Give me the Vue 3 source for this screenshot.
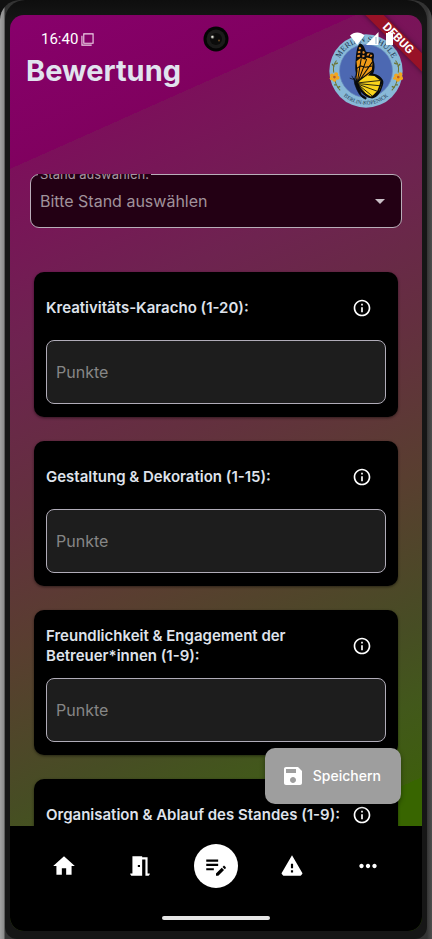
<script setup>
import { ref } from 'vue'

const stand = ref('')
const criteria = ref([
  { id: 'kreativitaet', title: 'Kreativitäts-Karacho (1-20):', points: '' },
  { id: 'gestaltung', title: 'Gestaltung & Dekoration (1-15):', points: '' },
  { id: 'freundlichkeit', title: 'Freundlichkeit & Engagement der Betreuer*innen (1-9):', points: '' },
  { id: 'organisation', title: 'Organisation & Ablauf des Standes (1-9):', points: '' },
])
const nav = [
  { id: 'home', label: 'Start', path: 'M10 20v-6h4v6h5v-8h3L12 3 2 12h3v8z' },
  { id: 'room', label: 'Räume', path: 'M14 6v15H3v-2h2V3h9v1h5v15h2v2h-4V6h-3zm-4 5v2h2v-2h-2z' },
  { id: 'rate', label: 'Bewertung', active: true, path: 'M3 10h11v2H3v-2zm0-2h11V6H3v2zm0 8h7v-2H3v2zm15.01-3.13.71-.71c.39-.39 1.02-.39 1.41 0l.71.71c.39.39.39 1.02 0 1.41l-.71.71-2.12-2.12zm-.71.71-5.3 5.3V21h2.12l5.3-5.3-2.12-2.12z' },
  { id: 'alert', label: 'Warnungen', path: 'M1 21h22L12 2 1 21zm12-3h-2v-2h2v2zm0-4h-2v-4h2v4z' },
  { id: 'more', label: 'Mehr', path: 'M6 10c-1.100 0-2 .9-2 2s.9 2 2 2 2-.9 2-2-.9-2-2-2zm12 0c-1.100 0-2 .9-2 2s.9 2 2 2 2-.9 2-2-.9-2-2-2zm-6 0c-1.100 0-2 .9-2 2s.9 2 2 2 2-.9 2-2-.9-2-2-2z' },
]
</script>

<template>
  <div class="device">
    <div class="bezel">
      <div class="screen">
        <div class="ribbon">DEBUG</div>
        <div class="status">
          <span class="clock">16:40</span>
          <svg class="sq" viewBox="0 0 14 14" aria-hidden="true">
            <path d="M3 1h10v10H3zM1 3v10h10.500" fill="none" stroke="#efd6e9" stroke-width="1.200" />
          </svg>
          <svg class="signals" viewBox="0 0 44 14" aria-hidden="true">
            <path d="M0 3.500C4-.6 10.500-.6 14.500 3.500L7.200 13z" fill="#fff" />
            <path d="M16 13 28.500 0v13z" fill="#fff" />
            <path d="M25.500 5h1v7h-1z" fill="#8fb2cc" />
            <path d="M36 1h2V0h3v1h2v12h-7z" fill="#fff" />
          </svg>
        </div>
        <svg class="camera" viewBox="0 0 26 26" aria-hidden="true">
          <circle cx="13" cy="13" r="12.500" fill="#050505" />
          <circle cx="13" cy="13" r="9.500" fill="#1b1b1a" />
          <circle cx="13" cy="13" r="6" fill="#0c0c0b" />
          <circle cx="9.500" cy="11" r="1.800" fill="#77776f" />
          <circle cx="9.300" cy="10.800" r=".9" fill="#f2f2ea" />
          <circle cx="16" cy="14.500" r="1" fill="#6b4a24" />
        </svg>

        <header class="top">
          <h1>Bewertung</h1>
          <svg class="logo" viewBox="27 28 218 218" role="img" aria-label="Merian Schule Berlin-Köpenick">
            <defs>
              <path id="arcTop" d="M50 137a86 86 0 0 1 172 0" />
              <path id="arcBottom" d="M37 137a99 99 0 0 0 198 0" />
            </defs>
            <circle cx="136" cy="137" r="108" fill="#88b9d8" />
            <circle cx="136" cy="137" r="78" fill="#4c68b2" stroke="#6889bd" stroke-width="2" />
            <text class="lg-top"><textPath href="#arcTop" startOffset="50%" text-anchor="middle">MERIAN SCHULE</textPath></text>
            <text class="lg-bottom"><textPath href="#arcBottom" startOffset="50%" text-anchor="middle">BERLIN-KÖPENICK</textPath></text>
            <g fill="none" stroke="#6c7434" stroke-width="3">
              <path d="M41 142q-4-22 8-36M44 162q4 20 16 32M231 142q4-22-8-36M228 162q-4 20-16 32" />
              <path d="M42 124l-6-8M45 117l8-4M48 178l-6 0M52 186l8-4M230 124l6-8M227 117l-8-4M224 178l6 0M220 186l-8-4" stroke-width="4" />
            </g>
            <g fill="#f3a61d">
              <circle cx="36" cy="150" r="6" /><circle cx="48" cy="147" r="6" /><circle cx="52" cy="157" r="6" /><circle cx="43" cy="163" r="6" /><circle cx="34" cy="159" r="5" />
              <circle cx="225" cy="150" r="6" /><circle cx="237" cy="147" r="6" /><circle cx="239" cy="158" r="6" /><circle cx="230" cy="163" r="6" /><circle cx="221" cy="158" r="5" />
            </g>
            <circle cx="43" cy="155" r="4" fill="#c45d15" />
            <circle cx="231" cy="155" r="4" fill="#c45d15" />

            <path d="M118 55c8 2 14 12 18 25l20 3c6 6 3 14 2 22 5 14 4 28-1 40 12 1 27 10 30 22 1 8-2 14-5 22-4 14-14 25-28 29-14-2-24-10-33-20l-14-27c-3-8-2-18-1-28-3-14-1-28 0-42 1-18 3-36 12-46z" fill="#090b0d" />
            <path d="M108 108l12-9 14 5 4-7 14 3 3 14-2 22-12 16-30 17-3-12 3-20z" fill="#ef9a18" />
            <path d="M109 164l34-14 18 2 18 14 2 12-5 15-12 14-14 5-18-10-14-18z" fill="#f9d41c" />
            <path d="M115 67l5-1 2 6-7 2zM112 79l7-2 1 6-8 2zM125 80l5-2 3 6-6 3zM111 90l7-1 0 6-8 1zM124 91l7-1 1 5-6 2zM139 86l8-2-3 7-6 1zM150 88l5 3-4 5-4-2z" fill="#e58a2b" />
            <g fill="none" stroke="#090b0d" stroke-width="3">
              <path d="M110 172l12-72M112 170l26-68M113 170l42-60M112 168l44-34M108 130l12-8 14 4 20-4" />
              <path d="M112 172l66-7M112 174l70 7M113 176l60 22M114 178l42 34M116 182l24 28" stroke-width="2.500" />
            </g>
            <path d="M181 166l-3 14-7 18-14 14" fill="none" stroke="#090b0d" stroke-width="5" />
            <path d="M100 158l14 20 8 28 15 10-2 4c-16-5-25-24-32-44zM100 161l-6-10M103 160l2-9M88 158l12 4" fill="#07090c" stroke="#07090c" stroke-width="2" />
          </svg>
        </header>

        <main class="scroll">
          <div class="select-field">
            <label for="stand">Stand auswählen:</label>
            <select id="stand" v-model="stand">
              <option value="">Bitte Stand auswählen</option>
            </select>
            <svg class="caret" viewBox="0 0 10 5" aria-hidden="true"><path d="M0 0h10L5 5z" fill="#c9bfc6" /></svg>
          </div>

          <section v-for="c in criteria" :key="c.id" class="card">
            <div class="card-head">
              <label :for="c.id">{{ c.title }}</label>
              <button type="button" class="info" :aria-label="'Info: ' + c.title">
                <svg viewBox="0 0 24 24" aria-hidden="true"><path d="M11 7h2v2h-2zm0 4h2v6h-2zm1-9C6.480 2 2 6.480 2 12s4.480 10 10 10 10-4.480 10-10S17.520 2 12 2zm0 18c-4.410 0-8-3.590-8-8s3.590-8 8-8 8 3.590 8 8-3.590 8-8 8z" fill="#fff" /></svg>
              </button>
            </div>
            <input :id="c.id" v-model="c.points" type="text" inputmode="numeric" placeholder="Punkte">
          </section>
        </main>

        <footer class="bottom">
          <button type="button" class="save">
            <svg viewBox="0 0 24 24" aria-hidden="true"><path d="M17 3H5c-1.110 0-2 .9-2 2v14c0 1.100.89 2 2 2h14c1.100 0 2-.9 2-2V7l-4-4zm-5 16c-1.660 0-3-1.340-3-3s1.340-3 3-3 3 1.340 3 3-1.340 3-3 3zm3-10H5V5h10v4z" fill="#fff" /></svg>
            <span>Speichern</span>
          </button>
          <nav>
            <a v-for="n in nav" :key="n.id" href="#" :class="{ active: n.active }" :aria-label="n.label">
              <svg viewBox="0 0 24 24" aria-hidden="true"><path :d="n.path" fill="currentColor" /></svg>
            </a>
          </nav>
          <div class="home-bar"></div>
        </footer>
      </div>
    </div>
  </div>
</template>

<style>
body {
  background: #101010;
}
</style>

<style scoped>
* {
  box-sizing: border-box;
}
.device {
  height: 100vh;
  padding: 0 5px;
  border-radius: 20px 20px 0 0;
  background: linear-gradient(90deg, #a2a2a2 0, #8c8c8c 4px, #333 5px, #333 calc(100% - 5px), #3a3a3a calc(100% - 4px), #4e4e4e 100%);
  font-family: Inter, "Noto Sans", sans-serif;
}
.bezel {
  height: 100%;
  padding: 15px 5px 8px;
  border-radius: 20px 20px 12px 12px;
  background: linear-gradient(#0e0e0e, #161616 20px, #161616);
}
.screen {
  position: relative;
  display: flex;
  flex-direction: column;
  height: 100%;
  overflow: hidden;
  border-radius: 14px;
  background: linear-gradient(156deg, #88006c 0%, #80015f 14%, #7c105b 14%, #6e2350 30%, #642f40 44%, #593e30 58%, #474d24 72%, #42581b 79%, #3e5e0e 86%, #386500 86%);
}
.status {
  position: relative;
  z-index: 3;
  display: flex;
  align-items: center;
  height: 20px;
  margin-top: 14px;
  padding: 0 28px 0 31px;
  color: #fff;
}
.clock {
  font: 400 15px/20px Roboto, sans-serif;
}
.sq {
  width: 13px;
  height: 13px;
  margin-left: 3px;
}
.signals {
  width: 44px;
  height: 14px;
  margin-left: auto;
}
.camera {
  position: absolute;
  z-index: 3;
  top: 11px;
  left: 50%;
  width: 26px;
  height: 26px;
  margin-left: -13px;
}
.ribbon {
  position: absolute;
  z-index: 2;
  top: 17px;
  right: -36px;
  width: 120px;
  transform: rotate(45deg);
  background: #981227;
  box-shadow: 0 0 5px rgba(0, 0, 0, 0.5);
  color: #fff;
  font: 700 12px/13px Roboto, sans-serif;
  text-align: center;
}
.top {
  display: flex;
  justify-content: space-between;
  align-items: flex-start;
  height: 125px;
  padding: 0 19px 0 16px;
}
h1 {
  margin: 4px 0 0;
  color: #e1e3ee;
  font-size: 29px;
  line-height: 36px;
  font-weight: 700;
}
.logo {
  width: 74px;
  height: 74px;
  margin-top: -15px;
}
.lg-top {
  fill: #20344c;
  font: 400 24px "Liberation Serif", serif;
}
.lg-bottom {
  fill: #20344c;
  font: 400 16px "Liberation Serif", serif;
}
.scroll {
  flex: 1;
  min-height: 0;
  overflow: hidden;
  padding: 0 20px;
}
.select-field {
  position: relative;
  margin-bottom: 44px;
}
.select-field label {
  position: absolute;
  top: -9px;
  left: 8px;
  padding: 0 2px;
  background: #230014;
  color: #a898a2;
  font-size: 13px;
  line-height: 18px;
}
select {
  display: block;
  width: 100%;
  height: 54px;
  padding: 0 40px 0 9px;
  appearance: none;
  border: 1px solid #b9aeb9;
  border-radius: 9px;
  background: #230014;
  color: #a0929b;
  font: 400 16px/24px Inter, sans-serif;
}
.caret {
  position: absolute;
  top: 25px;
  right: 17px;
  width: 10px;
  height: 5px;
}
.card {
  margin: 0 4px 24px;
  padding: 12px 12px 13px;
  border-radius: 10px;
  background: #000;
  box-shadow: 0 1px 3px rgba(0, 0, 0, 0.5);
}
.card-head {
  display: flex;
  align-items: center;
  height: 48px;
  margin-bottom: 8px;
}
.card-head label {
  flex: 1;
  color: #dfe2eb;
  font-size: 15px;
  line-height: 20px;
  font-weight: 600;
}
.info {
  display: grid;
  flex: none;
  place-items: center;
  width: 32px;
  height: 48px;
  margin-right: 8px;
  padding: 0;
  border: 0;
  background: none;
}
.info svg {
  width: 20px;
  height: 20px;
}
.card input {
  display: block;
  width: 100%;
  height: 64px;
  padding: 0 9px;
  border: 1px solid #b0acb8;
  border-radius: 8px;
  background: #1d1d1d;
  color: #e1e3ee;
  font: 400 16px/24px Inter, sans-serif;
}
.card input::placeholder {
  color: #868686;
  opacity: 1;
}
.bottom {
  position: relative;
  padding: 0 16px 11px;
  background: #000;
}
.save {
  position: absolute;
  right: 21px;
  bottom: calc(100% + 22px);
  display: flex;
  align-items: center;
  gap: 8px;
  height: 56px;
  padding: 0 20px 0 16px;
  border: 0;
  border-radius: 10px;
  background: #9e9e9e;
  box-shadow: 0 2px 5px rgba(0, 0, 0, 0.4);
  color: #fff;
  font: 500 14px/20px Inter, sans-serif;
}
.save svg {
  width: 24px;
  height: 24px;
}
nav {
  display: flex;
  height: 80px;
}
nav a {
  display: grid;
  flex: 1;
  place-items: center;
  color: #fff;
}
nav svg {
  box-sizing: content-box;
  width: 26px;
  height: 26px;
  padding: 9px;
  border-radius: 50%;
}
nav .active svg {
  background: #fff;
  color: #000;
}
.home-bar {
  width: 108px;
  height: 4px;
  margin: 10px auto 0;
  border-radius: 2px;
  background: #e6e6e6;
}
</style>
